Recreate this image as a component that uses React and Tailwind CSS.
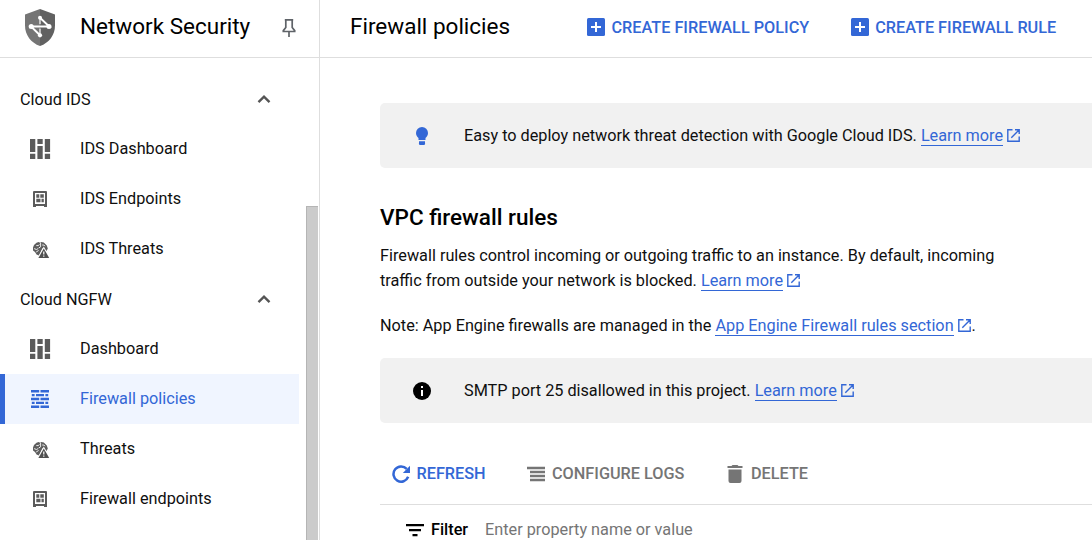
import React from "react";

const ShieldLogo = () => (
  <svg className="h-[37px] w-[30px] shrink-0" viewBox="0 0 30 37">
    <path d="M15 0 0 5.5v11C0 26 6 34 15 37Z" fill="#757575" />
    <path d="M15 0 30 5.5v11C30 26 24 34 15 37Z" fill="#616161" />
    <path d="M15 8.700 24.300 17.500H6L15 26.300" fill="none" stroke="#fff" strokeWidth="1.900" />
    <path d="M15 8.700v6.500M15 19.500v6.800" fill="none" stroke="#fff" strokeWidth="1.200" />
    <circle cx="15" cy="8.700" r="2" fill="#fff" />
    <circle cx="6.200" cy="17.500" r="2.500" fill="#fff" />
    <circle cx="24" cy="17.500" r="2.500" fill="#fff" />
    <circle cx="15" cy="26.300" r="2.100" fill="#fff" />
  </svg>
);

const Pin = () => (
  <svg className="mt-[2px] h-[20px] w-[16px] shrink-0" viewBox="0 0 16 20" fill="none" stroke="#5f6368" strokeWidth="1.700">
    <path d="M3.800 1.900h8.400M4.800 2v7.500L2.300 12.600v.9h11.400v-.9L11.200 9.500V2M8 13.500V19" />
  </svg>
);

const DashboardIcon = () => (
  <svg className="size-[22px]" viewBox="0 0 22 22" fill="#5b5b5b">
    <path d="M1 1h5.300v13H1zM1 15.700h5.300V21H1zM8.400 1h5.300v5H8.400zM8.400 8h5.300v13H8.400zM15.800 1h5.300v13h-5.300zM15.800 15.700h5.300V21h-5.300z" />
  </svg>
);

const EndpointIcon = () => (
  <svg className="size-[22px]" viewBox="0 0 22 22" fill="#5b5b5b">
    <path fillRule="evenodd" d="M5 3h12a1 1 0 0 1 1 1v15h-3v-1H7v1H4V4a1 1 0 0 1 1-1ZM6 5v11h10V5Z" />
    <path d="M7.300 6.300h3v3.400h-3zM11.300 6.300h3.500v3.400h-3.500zM7.300 10.700h4.200v3.600H7.300zM12.500 10.700h2.300v3.600h-2.300z" />
  </svg>
);

const ThreatIcon = () => (
  <svg className="size-[22px]" viewBox="0 0 22 22">
    <path d="M7.500 4.800 9.500 4 11.200 4.700 12.200 4.100 14.800 4.400 16.300 6 17.800 7.500 18.800 10.500 17.500 13 13.500 10 10 17.500 7.500 16.500 6 14 4 12.500 4 9.500 5 7Z" fill="#5e5e5e" />
    <path d="M7.300 7.600h1.900l1.300-1.100M11.600 4.800v4l-2 1.300M13.200 7h1.700l1 1.200M5.200 10.600l2.200.9 1.600-.8M7.200 14l2.400-1.500" fill="none" stroke="#fff" strokeWidth="0.900" />
    <path d="M14.800 8.400 21.700 21H7.900Z" fill="#fff" />
    <path d="M14.800 10.500 20.200 20H9.400Z" fill="#505050" />
    <path d="M14.200 13.600h1.200v3h-1.200zM14.200 17.500h1.200v1.200h-1.200z" fill="#fff" />
  </svg>
);

const FirewallIcon = () => (
  <svg className="size-[22px]" viewBox="0 0 22 22" fill="#3367d6">
    <path d="M2 2h8.200v2.400H2zM11.500 2H20v2.400h-8.500zM2.800 5.900h2.800v2.300H2.800zM7 5.900h8v2.300H7zM16.400 5.900h2.800v2.300h-2.800zM2 9.800h8.200v2.400H2zM11.500 9.800H20v2.400h-8.500zM2.800 13.800h2.800v2.300H2.800zM7 13.800h8v2.300H7zM16.400 13.800h2.800v2.300h-2.800zM2 17.600h8.200V20H2zM11.500 17.600H20V20h-8.500z" />
  </svg>
);

const External = () => (
  <svg className="ml-[4px] inline-block size-[13px] align-[-1px]" viewBox="0 0 13 13" fill="none" stroke="#3367d6" strokeWidth="1.400">
    <path d="M5.500.8H.8v11.400h11.400V7.500M8 .8h4.200V5M12 1 4.300 8.700" />
  </svg>
);

const Link = ({ children }) => (
  <>
    <a className="inline-block h-[21px] border-b border-[#3367d6] leading-[21px] text-[#3367d6]">{children}</a>
    <External />
  </>
);

const Section = ({ title }) => (
  <div className="flex h-[50px] items-center justify-between pr-[28px] pl-5">
    <span>{title}</span>
    <svg className="h-[10px] w-[14px]" viewBox="0 0 14 10" fill="none" stroke="#555" strokeWidth="2.400">
      <path d="M1.500 8.100 7 2.700l5.500 5.400" />
    </svg>
  </div>
);

const Item = ({ icon: Icon, label, active }) => (
  <div className={active ? "flex h-[50px] items-center border-l-[5px] border-[#3367d6] bg-[#f0f5ff] pl-6 text-[#3367d6]" : "flex h-[50px] items-center pl-[29px]"}>
    <Icon />
    <span className="ml-[29px] pb-[2px]">{label}</span>
  </div>
);

const CreateButton = ({ children }) => (
  <button className="flex items-center gap-[6.5px] font-medium text-[#3367d6]">
    <svg className="size-[18px]" viewBox="0 0 18 18">
      <rect width="18" height="18" rx="1.500" fill="#3367d6" />
      <path d="M9 4v10M4 9h10" stroke="#fff" strokeWidth="2" />
    </svg>
    {children}
  </button>
);

const Banner = ({ icon, children }) => (
  <div className="flex h-[65px] items-center rounded-l-[5px] bg-[#f1f1f1] pl-[33px]">
    {icon}
    <p className="ml-[33px] tracking-[-0.01px]">{children}</p>
  </div>
);

const Bulb = () => (
  <svg className="size-[18px]" viewBox="0 0 18 18" fill="#3367d6">
    <path d="M9 0a6 6 0 0 1 6 6c0 2.200-1 3.700-2.500 5v2h-7v-2C4 9.700 3 8.200 3 6a6 6 0 0 1 6-6ZM6 14.200h6V16a1.500 1.500 0 0 1-1.500 2h-3A1.500 1.500 0 0 1 6 16Z" />
  </svg>
);

const Info = () => (
  <svg className="size-[18px]" viewBox="0 0 18 18">
    <circle cx="9" cy="9" r="9" />
    <path d="M8 4h2v2H8zM8 8h2v6H8z" fill="#fff" />
  </svg>
);

export default function App() {
  return (
    <div className="flex h-[540px] w-[1092px] flex-col overflow-hidden bg-white font-['Roboto',sans-serif] text-[16.25px] leading-[25px] whitespace-nowrap text-[#0f0f0f]">
      <header className="flex h-[58px] shrink-0 border-b border-[#dedede]">
        <div className="flex w-[320px] shrink-0 items-center border-r border-[#dedede] pb-[3px] pl-[25px] text-black">
          <ShieldLogo />
          <span className="ml-[25px] w-[201px] pb-[2px] text-[22.5px]">Network Security</span>
          <Pin />
        </div>
        <div className="flex items-center pb-[3px] pl-[30px]">
          <h1 className="w-[237px] pb-[2px] text-[22.5px] text-black">Firewall policies</h1>
          <div className="flex gap-[41.5px]">
            <CreateButton>CREATE FIREWALL POLICY</CreateButton>
            <CreateButton>CREATE FIREWALL RULE</CreateButton>
          </div>
        </div>
      </header>
      <div className="flex min-h-0 flex-1">
        <aside className="flex w-[320px] shrink-0 border-r border-[#dedede]">
          <nav className="mr-[7px] w-[299px] pt-4">
            <Section title="Cloud IDS" />
            <Item icon={DashboardIcon} label="IDS Dashboard" />
            <Item icon={EndpointIcon} label="IDS Endpoints" />
            <Item icon={ThreatIcon} label="IDS Threats" />
            <Section title="Cloud NGFW" />
            <Item icon={DashboardIcon} label="Dashboard" />
            <Item icon={FirewallIcon} label="Firewall policies" active />
            <Item icon={ThreatIcon} label="Threats" />
            <Item icon={EndpointIcon} label="Firewall endpoints" />
          </nav>
          <div className="mt-[148px] w-[12px] border-t border-l border-[#b5b5b5] bg-[#cbcbcb]" />
        </aside>
        <main className="flex-1 pt-[45px] pl-[60px]">
          <Banner icon={<Bulb />}>
            Easy to deploy network threat detection with Google Cloud IDS. <Link>Learn more</Link>
          </Banner>
          <h2 className="mt-[36px] text-[22.5px] leading-[26px] font-medium text-black">VPC firewall rules</h2>
          <p className="mt-[13px]">
            Firewall rules control incoming or outgoing traffic to an instance. By default, incoming
            <br />
            traffic from outside your network is blocked. <Link>Learn more</Link>
          </p>
          <p className="mt-5">
            Note: App Engine firewalls are managed in the <Link>App Engine Firewall rules section</Link>
            <span className="ml-px">.</span>
          </p>
          <div className="mt-5">
            <Banner icon={<Info />}>
              SMTP port 25 disallowed in this project. <Link>Learn more</Link>
            </Banner>
          </div>
          <div className="mt-[20px] flex h-[62px] items-center border-b border-[#dedede] pl-[12px] font-medium text-[#757575]">
            <button className="flex w-[135px] items-center gap-[6.5px] text-[#3367d6]">
              <svg className="mt-px size-[18px]" viewBox="0 0 18 18">
                <path d="M14.700 3.900A7.600 7.600 0 1 0 16.200 11.800" fill="none" stroke="#3367d6" strokeWidth="2.500" />
                <path d="M18 .8v7.200h-7.200Z" fill="#3367d6" />
              </svg>
              REFRESH
            </button>
            <button className="flex w-[200px] items-center gap-[7px]">
              <svg className="h-[16px] w-[18px]" viewBox="0 0 18 16" fill="#757575">
                <path d="M0 .8h18v2.400H0zM3 4.800h15v2.400H3zM3 8.800h15v2.400H3zM3 12.800h15v2.400H3z" />
              </svg>
              CONFIGURE LOGS
            </button>
            <button className="flex items-center gap-[8px]">
              <svg className="mt-px h-[18px] w-[16px]" viewBox="0 0 16 18" fill="#757575">
                <path d="M5.500 0h5l1 1H15.500v2H.5V1h4zM1.500 4.500h13V16a2 2 0 0 1-2 2h-9a2 2 0 0 1-2-2Z" />
              </svg>
              DELETE
            </button>
          </div>
          <div className="flex h-[50px] items-center pl-[26px]">
            <svg className="h-[14px] w-[18px]" viewBox="0 0 18 14">
              <path d="M0 1h18v2.300H0zM3 6h12v2.300H3zM6.500 11h5v2.300h-5z" />
            </svg>
            <span className="ml-[7px] w-[54px] pb-[2px] font-medium text-black">Filter</span>
            <span className="pb-[2px] text-[#757575]">Enter property name or value</span>
          </div>
        </main>
      </div>
    </div>
  );
}
